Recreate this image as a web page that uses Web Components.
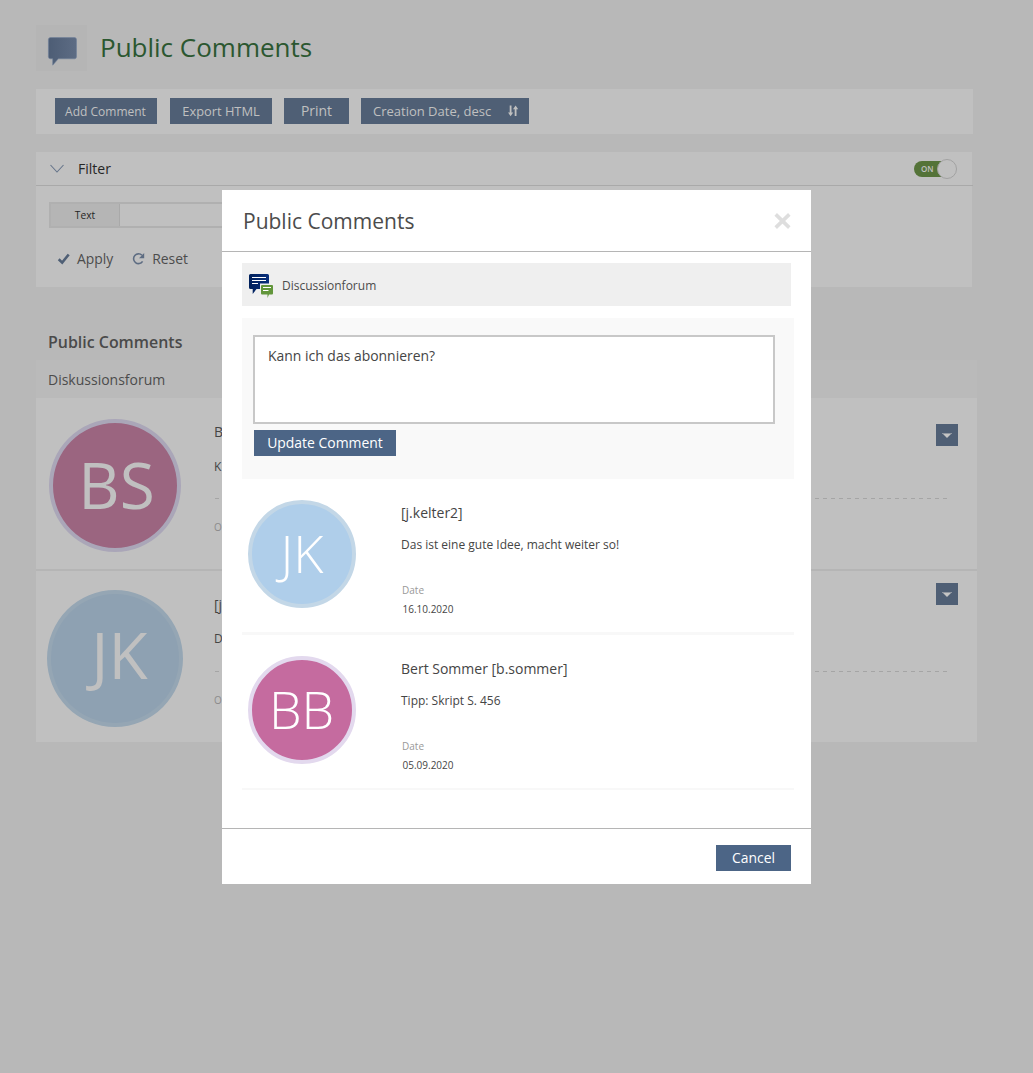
<!DOCTYPE html>
<html lang="de">
<head>
<meta charset="utf-8">
<title>Public Comments</title>
<style>
html,body{margin:0;height:100%;overflow:hidden}
body{font-family:"Open Sans","Noto Sans",sans-serif;background:#b8b8b8;color:#4c4c4c}
</style>
</head>
<body>
<comments-page></comments-page>
<comments-modal></comments-modal>
<script>
function define(name, html) {
  customElements.define(name, class extends HTMLElement {
    connectedCallback() {
      if (this.shadowRoot) return;
      const root = this.attachShadow({mode: 'open'});
      const t = document.createElement('template');
      t.innerHTML = html;
      root.append(t.content.cloneNode(true));
    }
  });
}

define('ui-button', `
<style>
:host{display:flex;align-items:center;justify-content:center;box-sizing:border-box;height:26px;background:var(--btn,#4f5f75);color:var(--btn-text,#c0c0c0);white-space:nowrap;line-height:26px}
</style><slot></slot>`);

define('ui-avatar', `
<style>
:host{display:flex;align-items:center;justify-content:center;box-sizing:border-box;border-radius:50%;flex:none;width:var(--d);height:var(--h,var(--d));border:4px solid var(--ring);background:var(--fill);line-height:1;white-space:nowrap}
span{display:block;padding:var(--nudge,0)}
</style><span><slot></slot></span>`);

define('menu-toggle', `
<style>
:host{display:block;width:22px;height:22px;background:#4f5f75;flex:none}svg{display:block}
</style><svg width="22" height="22"><path d="M6 9H16L11 14Z" fill="#c5c5c5"/><path d="M6 9.5H16" stroke="#9097a1"/></svg>`);

define('on-switch', `
<style>
:host{display:flex;align-items:center;width:43px;height:20px}
.track{display:flex;align-items:center;box-sizing:border-box;width:38px;height:16px;border-radius:8px;background:#547338;padding-left:7px;font:600 8px/16px "Open Sans",sans-serif;color:#c0c0c0}
.knob{box-sizing:border-box;width:20px;height:20px;border:1px solid #a2a2a2;border-radius:50%;background:#c0c0c0;margin-left:-15px}
</style><span class="track">ON</span><span class="knob"></span>`);

define('filter-panel', `
<style>
:host{display:block;width:936px;height:135px;background:#c0c0c0;margin-top:18px}
.head{display:flex;align-items:center;height:33px;width:937px;box-sizing:content-box;border-bottom:1px solid #a9a9a9}
.head svg{margin-left:14px}
.title{margin-left:14px;font-size:14px;line-height:33px;color:#262626;flex:1}
on-switch{margin-right:16px}
.field{display:flex;box-sizing:border-box;width:500px;height:26px;margin:16px 0 0 13px;border:2px solid #b0b0b0}
.label{box-sizing:border-box;width:69px;background:#b5b5b5;border-right:1px solid #a9a9a9;text-align:center;font-size:10.2px;line-height:22px;color:#262626}
.actions{display:flex;align-items:center;margin:20px 0 0 21px;height:22px;font-size:13.9px;line-height:22px}
.actions span{margin-left:7px}.actions svg+span+svg{margin-left:19px}
</style>
<div class="head"><svg width="14" height="9" viewBox="0 0 14 9"><path d="M.5 1L7 8L13.5 1" fill="none" stroke="#65748a" stroke-width="1.1"/></svg><span class="title">Filter</span><on-switch></on-switch></div>
<div class="field"><span class="label">Text</span></div>
<div class="actions"><svg width="13" height="12" viewBox="0 0 13 12"><path d="M1.7 6.2L5.2 9.6L11.7 1.5" fill="none" stroke="#4f5f75" stroke-width="2.6"/></svg><span>Apply</span><svg width="13" height="13" viewBox="0 0 13 13"><path d="M10.6 8.4A4.9 4.9 0 1 1 10 2.3" fill="none" stroke="#5d6c82" stroke-width="1.6"/><path d="M12.2 0V5.2H7Z" fill="#5d6c82"/></svg><span>Reset</span></div>`);

define('page-comment', `
<style>
:host{display:flex;box-sizing:border-box;height:171px;background:#c0c0c0}
.av{width:178px;box-sizing:border-box;flex:none}
.text{flex:1;color:#454545;font-size:13px;line-height:20px}
.name{margin-top:24px;font-size:14px}.body{margin-top:var(--t2);font-size:12px}
.rule{height:1px;margin-top:var(--t3);margin-left:.5px;width:732px;background:repeating-linear-gradient(90deg,#a5a5a5 0 4px,transparent 4px 8px)}
.org{margin-top:18px;font-size:10px;color:#8b8b8b}
menu-toggle{margin:var(--mt) 19px 0 -41px}
</style>
<div class="av"><slot name="avatar"></slot></div>
<div class="text"><div class="name"><slot name="name"></slot></div><div class="body"><slot name="body"></slot></div><div class="rule"></div><div class="org"><slot name="org"></slot></div></div>
<menu-toggle></menu-toggle>`);

define('comments-page', `
<style>
:host{display:block;box-sizing:border-box;height:1073px;padding:25px 0 0 36px;overflow:hidden;background:#b8b8b8}
header{display:flex;height:46px}
.icon{width:51px;height:46px;background:#b5b5b5}
h1{margin:0 0 0 13px;font-weight:400;font-size:26px;line-height:45px;color:#2b5730;white-space:nowrap}
nav{display:flex;box-sizing:border-box;width:937px;height:45px;margin-top:18px;padding:9px 0 0 19px;background:#c0c0c0}
h2{margin:44px 0 0 12px;font-weight:600;font-size:15.95px;line-height:22px;color:#4a4a4a}
.list{width:941px;margin-top:7px}
.forum{height:38px;line-height:39px;padding-left:12px;background:#bababa;font-size:14px;color:#4c4c4c}
.gap{height:2px;background:#b5b5b5}
.bs{--d:132px;--h:133px;--ring:#aaa6b8;--fill:#9b6580;--nudge:0 0 2px 3px;margin:21px 0 0 13px;font-size:64px;color:#c0c0c0}
.jk{--d:136px;--h:137px;--ring:#95a6b4;--fill:#8ea1b2;--nudge:0 0 7px 9px;margin:19px 0 0 11px;font-size:64px;color:#c0c0c0}
.one{--t2:15px;--t3:21px;--mt:26px}
.two{--t2:14px;--t3:22px;--mt:12px}
</style>
<header><div class="icon"><svg width="51" height="46" viewBox="0 0 51 46"><defs><linearGradient id="g"><stop stop-color="#4d5d75"/><stop offset="1" stop-color="#5d6c84"/></linearGradient></defs><path d="M14.5 12.6H38.5Q40.5 12.6 40.5 14.6V31.8Q40.5 33.8 38.5 33.8H22.3L16.7 40.2V33.8H14.5Q12.4 33.8 12.4 31.8V14.6Q12.4 12.6 14.5 12.6Z" fill="url(#g)" stroke="#71819a" stroke-width=".6"/></svg></div><h1>Public Comments</h1></header>
<nav><ui-button style="width:102px;font-size:12px;padding:2px 1px 0 0">Add Comment</ui-button><ui-button style="width:102px;margin-left:13px;font-size:12.85px">Export HTML</ui-button><ui-button style="width:65px;margin-left:12px;font-size:13.9px">Print</ui-button><ui-button style="width:168px;margin-left:12px;font-size:13px;justify-content:flex-start;padding-left:12px">Creation Date, desc<svg style="margin-left:17px" width="11" height="12" viewBox="0 0 11 12"><path d="M2.6 .5V8M7.6 3.5V11" stroke="#c0c0c0" stroke-width="1.8"/><path d="M0 7.5H5.2L2.6 11.2ZM5 4.3H10.2L7.6 .6Z" fill="#c0c0c0"/></svg></ui-button></nav>
<filter-panel></filter-panel>
<h2>Public Comments</h2>
<div class="list">
<div class="forum">Diskussionsforum</div>
<page-comment class="one"><ui-avatar slot="avatar" class="bs">BS</ui-avatar><span slot="name">B</span><span slot="body">K</span><span slot="org">O</span></page-comment>
<div class="gap"></div>
<page-comment class="two"><ui-avatar slot="avatar" class="jk">JK</ui-avatar><span slot="name">[j</span><span slot="body">D</span><span slot="org">O</span></page-comment>
</div>`);

define('modal-comment', `
<style>
:host{display:flex;box-sizing:border-box;width:552px;border-bottom:var(--line,2px) solid #f8f8f8;padding:21px 0 0 6px;height:var(--rowh,156px);color:#454545;white-space:nowrap}
.text{margin-left:45px}
.name{font-size:14px;line-height:20px;margin-top:3px}
.body{font-size:12px;line-height:18px;margin-top:13px}
.dl{font-size:10px;line-height:14px;margin:29px 0 0 1px;color:#999}
.date{font-size:10px;line-height:14px;margin:5px 0 0 1.5px}
</style>
<slot name="avatar"></slot><div class="text"><div class="name"><slot name="name"></slot></div><div class="body"><slot></slot></div><div class="dl">Date</div><div class="date"><slot name="date"></slot></div></div>`);

define('comments-modal', `
<style>
:host{position:absolute;left:222px;top:190px;width:589px;height:694px;background:#fff;display:flex;flex-direction:column;--btn:#4c6586;--btn-text:#fff}
header{display:flex;align-items:center;justify-content:space-between;height:61px;border-bottom:1px solid #b5b5b5;padding:0 20.5px 0 21px;flex:none}
h1{margin:0;font-size:21px;font-weight:400;line-height:60px;color:#4c4c4c}
main{flex:1;padding:11px 0 0 20px}
.forum{display:flex;align-items:center;width:549px;height:43px;background:#efefef;font-size:12px;color:#4c4c4c}
.forum svg{margin-left:7px}.forum span{margin-left:8px;padding-top:2px}
.form{box-sizing:border-box;width:552px;height:161px;margin-top:12px;background:#f9f9f9;padding:17px 0 0 11px}
.area{box-sizing:border-box;width:522px;height:89px;border:2px solid #c8c8c8;background:#fff;padding:9px 0 0 13px;font-size:13.95px;line-height:20px;color:#454545}
.form ui-button{width:142px;margin:6px 0 0 1px;font-size:13.95px}
ui-avatar{--d:108px;--nudge:0 0 2px 0;color:#fff;font-weight:300;font-size:52px}
footer{display:flex;justify-content:flex-end;height:55px;border-top:1px solid #b5b5b5;padding:0 20px;flex:none}
footer ui-button{width:75px;margin-top:16px;font-size:13.9px}
</style>
<header><h1>Public Comments</h1><svg width="17" height="16" viewBox="0 0 17 16"><path d="M1.7 1.4L15.3 14.6M15.3 1.4L1.7 14.6" stroke="#dedede" stroke-width="3.6"/></svg></header>
<main>
<div class="forum"><svg width="25" height="26" viewBox="0 0 25 26"><defs><linearGradient id="b"><stop stop-color="#00205b"/><stop offset="1" stop-color="#082f7c"/></linearGradient></defs><path d="M1.5 2H18.5Q20 2 20 3.5V15.5Q20 17 18.5 17H7.5L3.7 22V17H1.5Q0 17 0 15.5V3.5Q0 2 1.5 2Z" fill="url(#b)"/><path d="M3 5.5H17M3 8.5H17M3 11.5H9" stroke="#fff"/><path d="M11 11.5H25V24H11Z" fill="#efefef"/><path d="M13 13H23Q24 13 24 14V21.5Q24 22.5 23 22.5H20L18.5 26V22.5H13Q12 22.5 12 21.5V14Q12 13 13 13Z" fill="#62963b"/><path d="M14 15.5H22M14 18.5H19.5" stroke="#fff"/></svg><span>Discussionforum</span></div>
<div class="form"><div class="area">Kann ich das abonnieren?</div><ui-button>Update Comment</ui-button></div>
<modal-comment style="--line:3px"><ui-avatar slot="avatar" style="--ring:#c3d7e7;--fill:#afceea">JK</ui-avatar><span slot="name">[j.kelter2]</span>Das ist eine gute Idee, macht weiter so!<span slot="date">16.10.2020</span></modal-comment>
<modal-comment style="--rowh:155px"><ui-avatar slot="avatar" style="--nudge:0 1px 2px 0;--ring:#e3d9ee;--fill:#c56b9f">BB</ui-avatar><span slot="name">Bert Sommer [b.sommer]</span>Tipp: Skript S. 456<span slot="date">05.09.2020</span></modal-comment>
</main>
<footer><ui-button>Cancel</ui-button></footer>`);
</script>
</body>
</html>
